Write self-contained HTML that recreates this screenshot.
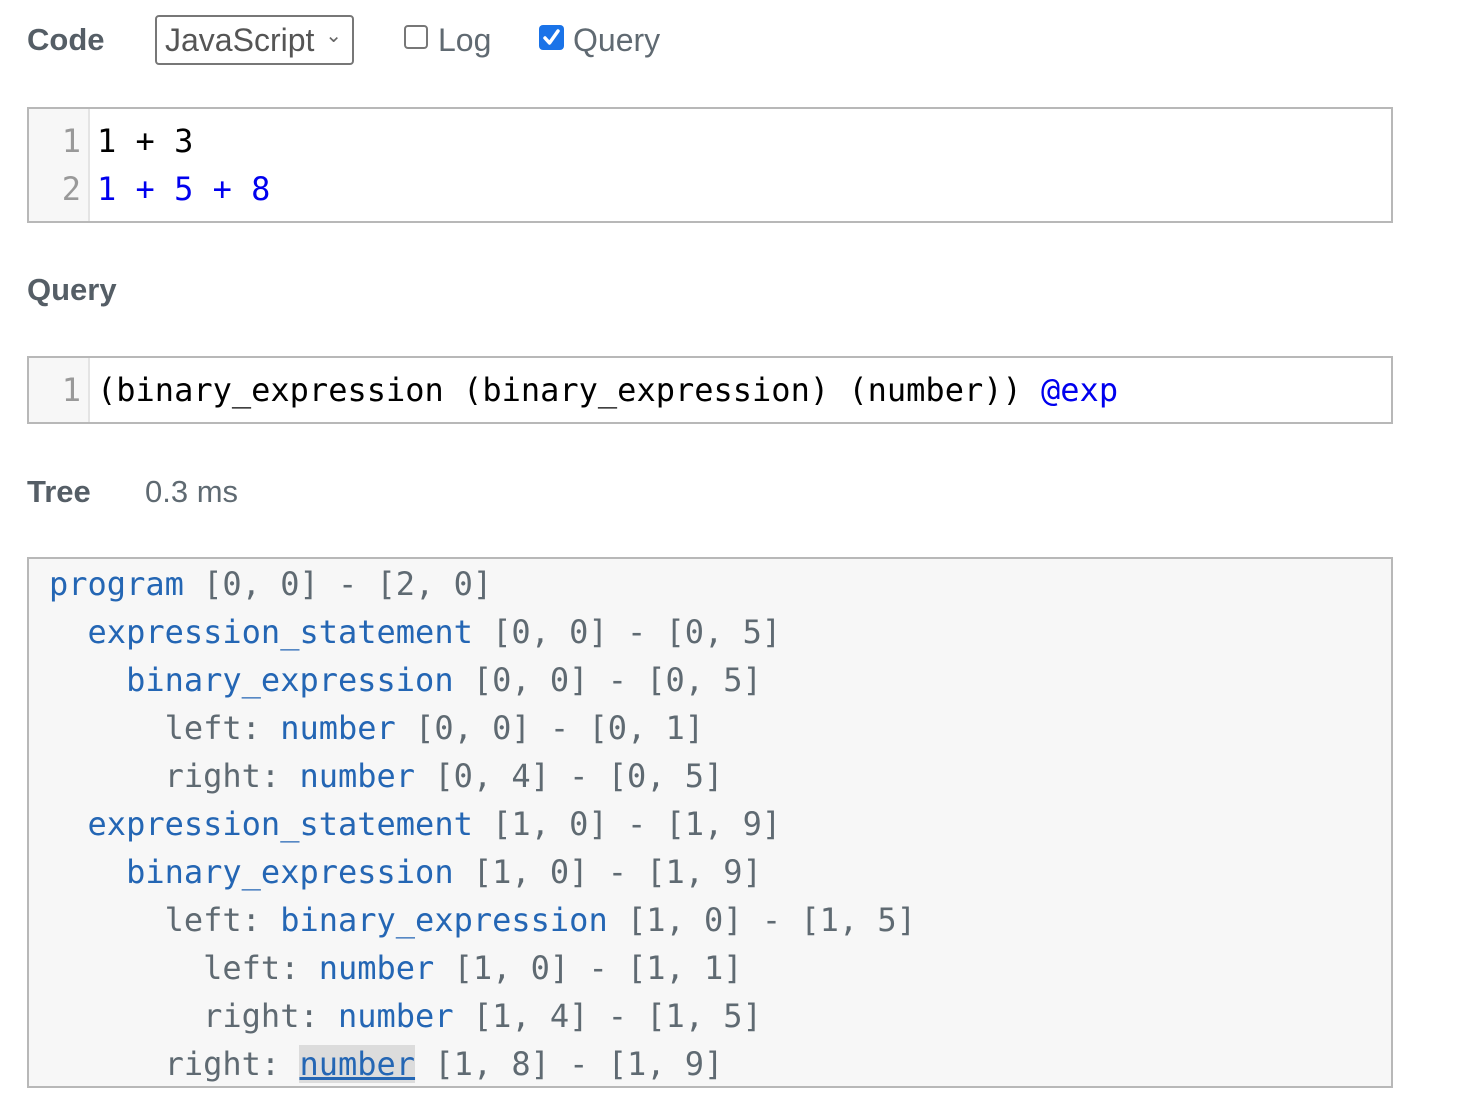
<!DOCTYPE html>
<html><head><meta charset="utf-8"><style>
body{margin:0;background:#fff;width:1474px;height:1112px;position:relative;overflow:hidden;font-family:"Liberation Sans",sans-serif}
.lbl{position:absolute;font-weight:bold;font-size:31px;color:#555e66;line-height:40px}
.box{position:absolute;left:27px;width:1362px;border:2px solid #b8b8b8;background:#fff}
.gut{position:absolute;left:0;top:0;bottom:0;width:59px;background:#f7f7f7;border-right:2px solid #e4e4e4}
.ln{position:absolute;left:0;width:52px;text-align:right;color:#999;font:32px/48px "DejaVu Sans Mono",monospace}
.cd{position:absolute;left:68px;font:32px/48px "DejaVu Sans Mono",monospace;white-space:pre}
.tree{position:absolute;left:27px;top:557px;width:1366px;height:531px;border:2px solid #b8b8b8;background:#f7f7f7;font:32px/48px "DejaVu Sans Mono",monospace;color:#5f6a72;padding-top:1px;box-sizing:border-box}
.tree div{padding-left:20px;white-space:pre;height:48px}
.n{color:#2466b4}
.hl{background:#dcdcdc;text-decoration:underline}
</style></head><body>
<div class="lbl" style="left:27px;top:20px">Code</div>
<div style="position:absolute;left:155px;top:15px;border:2px solid #777;border-radius:4px;font-size:32px;color:#555;line-height:46px;padding-left:8px;box-sizing:border-box;width:199px;height:50px">JavaScript<span style="position:absolute;right:10px;top:-4px;font-size:20px;color:#666">&#8964;</span></div>
<div style="position:absolute;left:404px;top:25px;width:24px;height:24px;border:2px solid #777;border-radius:4px;box-sizing:border-box"></div>
<div style="position:absolute;left:438px;top:20px;font-size:32px;color:#606a72;line-height:40px">Log</div>
<div style="position:absolute;left:539px;top:25px;width:25px;height:25px;background:#1a73e8;border-radius:4px"><svg width="25" height="25" viewBox="0 0 25 25"><path d="M6 13 L10.5 18 L19 6" fill="none" stroke="#fff" stroke-width="3.5" stroke-linecap="round" stroke-linejoin="round"/></svg></div>
<div style="position:absolute;left:573px;top:20px;font-size:32px;color:#606a72;line-height:40px">Query</div>

<div class="box" style="top:107px;height:112px">
<div class="gut"></div>
<div class="ln" style="top:8px">1</div><div class="ln" style="top:56px">2</div>
<div class="cd" style="top:8px;color:#000">1 + 3</div>
<div class="cd" style="top:56px;color:#0000ee">1 + 5 + 8</div>
</div>

<div class="lbl" style="left:27px;top:270px">Query</div>
<div class="box" style="top:356px;height:64px">
<div class="gut"></div>
<div class="ln" style="top:8px">1</div>
<div class="cd" style="top:8px;color:#000">(binary_expression (binary_expression) (number)) <span style="color:#0000ee">@exp</span></div>
</div>

<div class="lbl" style="left:27px;top:472px">Tree</div>
<div style="position:absolute;left:145px;top:472px;font-size:31px;color:#5f6a72;line-height:40px">0.3 ms</div>

<div class="tree"><div><span class="n">program</span> [0, 0] - [2, 0]</div><div>  <span class="n">expression_statement</span> [0, 0] - [0, 5]</div><div>    <span class="n">binary_expression</span> [0, 0] - [0, 5]</div><div>      left: <span class="n">number</span> [0, 0] - [0, 1]</div><div>      right: <span class="n">number</span> [0, 4] - [0, 5]</div><div>  <span class="n">expression_statement</span> [1, 0] - [1, 9]</div><div>    <span class="n">binary_expression</span> [1, 0] - [1, 9]</div><div>      left: <span class="n">binary_expression</span> [1, 0] - [1, 5]</div><div>        left: <span class="n">number</span> [1, 0] - [1, 1]</div><div>        right: <span class="n">number</span> [1, 4] - [1, 5]</div><div>      right: <span class="n hl">number</span> [1, 8] - [1, 9]</div></div>
</body></html>
